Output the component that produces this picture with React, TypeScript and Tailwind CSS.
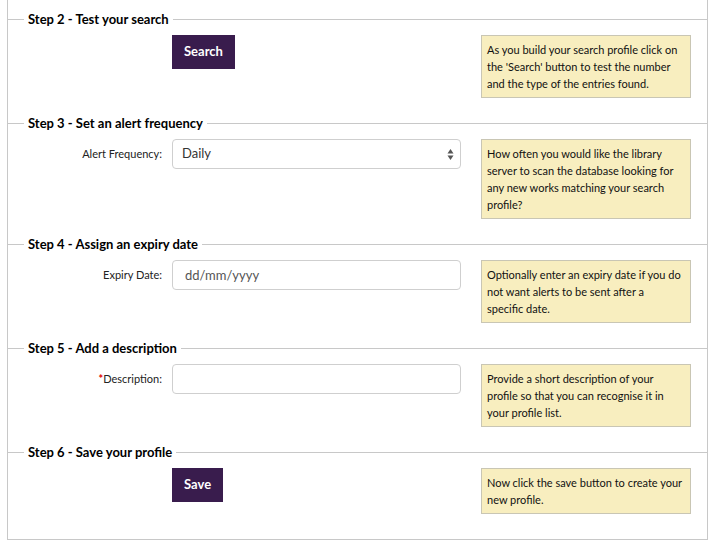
import React from "react";

const font = { fontFamily: "Lato, 'Open Sans', sans-serif" };

interface StepProps {
  title: string;
  help: string;
  children: React.ReactNode;
  last?: boolean;
}

function Step({ title, help, children, last }: StepProps) {
  return (
    <section className={last ? "pb-[25px]" : "pb-[16px]"}>
      {/* legend */}
      <div className="flex items-center h-[18px]">
        <div className="w-[16px] h-px bg-[#c8c8c8]"></div>
        <h2 className="px-[4px] text-[13px] font-bold text-black leading-[18px]">{title}</h2>
        <div className="flex-1 h-px bg-[#c8c8c8]"></div>
      </div>

      <div className="mt-[7px] flex items-start">
        <div className="w-[453px] flex">{children}</div>
        <div className="ml-[20px] w-[210px] border border-[#c9c6b4] bg-[#f8eebf] px-[5px] py-[5px] text-[11px] leading-[17px] text-[#111] whitespace-pre-line">
          {help}
        </div>
      </div>
    </section>
  );
}

function Label({ children }: { children: React.ReactNode }) {
  return <div className="w-[154px] text-right text-[11px] text-[#222] self-center">{children}</div>;
}

function Button({ children }: { children: React.ReactNode }) {
  return (
    <button className="ml-[164px] h-[34px] px-[12px] bg-[#391c4d] text-white text-[13px] font-bold">
      {children}
    </button>
  );
}

export default function App() {
  return (
    <div className="min-h-screen bg-white pl-[7px]" style={font}>
      <div className="w-[701px] border-x border-b border-[#c8c8c8] pt-[10px]">
        <Step
          title="Step 2 - Test your search"
          help={"As you build your search profile click on\nthe 'Search' button to test the number\nand the type of the entries found."}
        >
          <Button>Search</Button>
        </Step>

        <Step
          title="Step 3 - Set an alert frequency"
          help={"How often you would like the library\nserver to scan the database looking for\nany new works matching your search\nprofile?"}
        >
          <Label>Alert Frequency:</Label>
          <div className="ml-[10px] relative w-[289px] h-[30px] rounded-[4px] border border-[#cfcfcf] bg-white flex items-center px-[9px] text-[13px] text-[#333]">
            Daily
            <svg className="absolute right-[6px] top-[8px]" width="7" height="13" viewBox="0 0 7 13">
              <path d="M3.5 1 L6.5 5.5 L0.5 5.5 Z" fill="#555" />
              <path d="M3.5 12 L6.5 7.5 L0.5 7.5 Z" fill="#555" />
            </svg>
          </div>
        </Step>

        <Step
          title="Step 4 - Assign an expiry date"
          help={"Optionally enter an expiry date if you do\nnot want alerts to be sent after a\nspecific date."}
        >
          <Label>Expiry Date:</Label>
          <input
            placeholder="dd/mm/yyyy"
            className="ml-[10px] w-[289px] h-[30px] rounded-[4px] border border-[#cfcfcf] bg-white px-[12px] text-[13px] text-[#333] placeholder:text-[#555] outline-none"
          />
        </Step>

        <Step
          title="Step 5 - Add a description"
          help={"Provide a short description of your\nprofile so that you can recognise it in\nyour profile list."}
        >
          <Label>
            <span className="text-[#e00000] font-bold">*</span>Description:
          </Label>
          <input className="ml-[10px] w-[289px] h-[30px] rounded-[4px] border border-[#cfcfcf] bg-white px-[12px] text-[13px] outline-none" />
        </Step>

        <Step
          title="Step 6 - Save your profile"
          help={"Now click the save button to create your\nnew profile."}
          last
        >
          <Button>Save</Button>
        </Step>
      </div>
    </div>
  );
}
